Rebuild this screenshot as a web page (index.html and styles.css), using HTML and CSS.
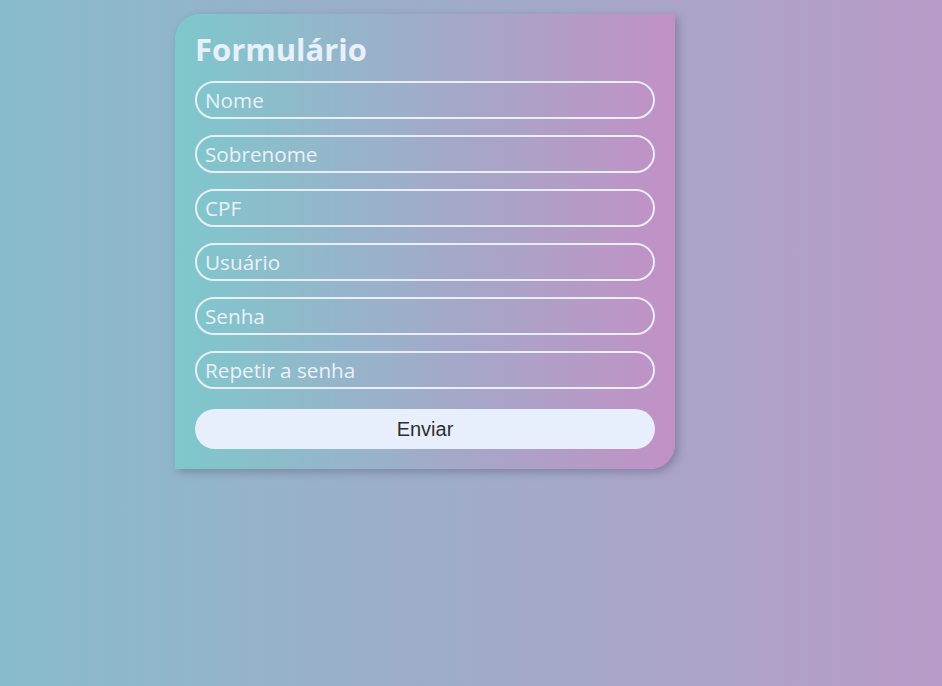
FILE: index.html
```html
<!DOCTYPE html>
<html lang="pt-BR">
<head>
<meta charset="utf-8">
<title>Formulário</title>
<link rel="stylesheet" href="styles.css">
</head>
<body>
<main class="page">
  <form class="card">
    <h1 class="title">Formulário</h1>
    <input class="field" type="text" placeholder="Nome">
    <input class="field" type="text" placeholder="Sobrenome">
    <input class="field" type="text" placeholder="CPF">
    <input class="field" type="text" placeholder="Usuário">
    <input class="field" type="password" placeholder="Senha">
    <input class="field" type="password" placeholder="Repetir a senha">
    <button class="submit" type="button">Enviar</button>
  </form>
</main>
</body>
</html>
```
FILE: styles.css
```css
html, body {
  margin: 0;
  height: 100%;
}
body {
  background: linear-gradient(to right, #88bcca, #b89bc8);
  font-family: "Open Sans", sans-serif;
}
.page {
  padding: 14px 0 0 175px;
}
.card {
  width: 460px;
  padding: 17px 20px 20px;
  background: linear-gradient(to right, #7ec8cc, #c290c5);
  border-radius: 25px 0 25px 0;
  box-shadow: 3px 3px 8px rgba(60, 60, 90, 0.35);
  display: flex;
  flex-direction: column;
  gap: 16px;
}
.title {
  margin: 0 0 -3px;
  font-size: 31px;
  font-weight: 700;
  line-height: 37px;
  color: #e8f0fc;
}
.field {
  box-sizing: border-box;
  height: 38px;
  width: 100%;
  margin: 0;
  padding: 0 8px;
  border: 2px solid #e8eefb;
  border-radius: 19px;
  background: transparent;
  font-family: "Open Sans", sans-serif;
  font-size: 20.7px;
  color: #e8f0fc;
  outline: none;
}
.field::placeholder {
  color: #eaf1fd;
  opacity: 1;
}
.submit {
  margin-top: 4px;
  height: 40px;
  width: 100%;
  border: none;
  border-radius: 20px;
  background: #e8effc;
  font-family: "Liberation Sans", Arial, sans-serif;
  font-size: 20px;
  color: #2e2e2e;
}
```
